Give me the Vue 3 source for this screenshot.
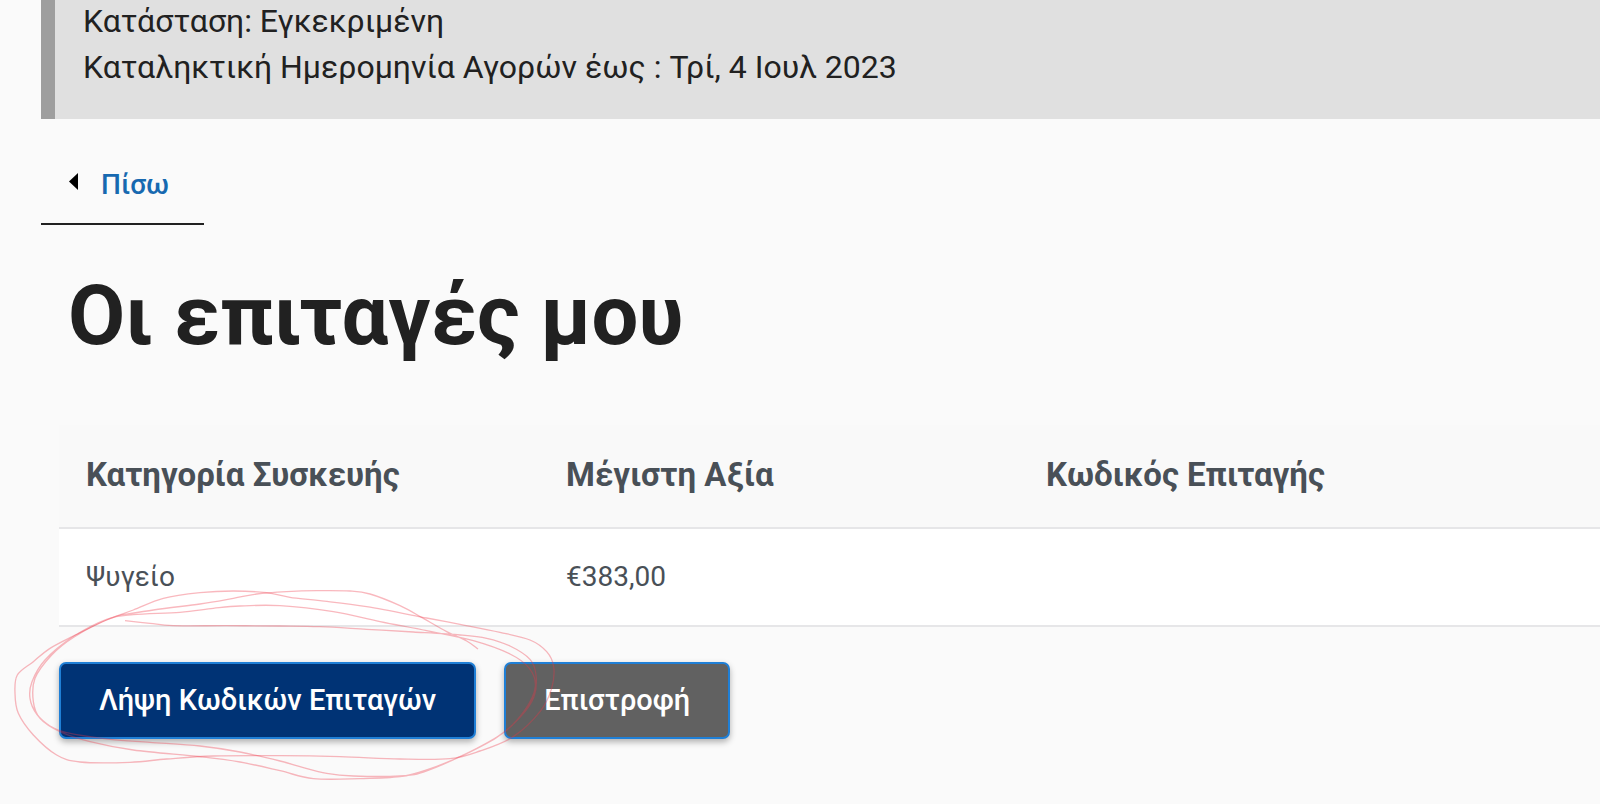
<script setup>
const vouchers = [{ category: 'Ψυγείο', value: '€383,00', code: '' }]

// Freehand pen marks around the primary action, as sampled pen positions
const marks = [
  [
    [375, 182], [450, 190], [520, 197], [680, 197], [840, 198], [960, 200], [1100, 208], [1240, 216], [1380, 225],
    [1460, 235], [1530, 258], [1590, 298], [1608, 345], [1602, 410], [1560, 472], [1490, 532], [1380, 590],
    [1270, 636], [1200, 648], [1060, 648], [980, 640], [900, 620], [840, 603], [720, 576], [600, 558], [450, 547],
    [330, 538], [200, 518], [150, 498], [110, 462], [90, 415], [96, 365], [135, 300], [220, 230], [320, 178],
    [400, 164], [540, 157], [640, 145], [720, 138], [840, 137], [1000, 155], [1140, 185], [1280, 212], [1420, 242],
    [1530, 282], [1588, 325], [1606, 380], [1575, 450], [1510, 518], [1390, 585], [1280, 630], [1200, 650],
    [1080, 656], [940, 656], [840, 632], [720, 606], [600, 590], [400, 570], [270, 545], [180, 515], [120, 475],
    [100, 425], [105, 355], [155, 285], [220, 232], [330, 175], [460, 150], [600, 132], [700, 115], [770, 102],
    [860, 95], [950, 92], [1050, 93], [1110, 102], [1200, 137], [1270, 175], [1340, 215], [1400, 243], [1434, 267]
  ],
  [
    [220, 228], [150, 265], [100, 305], [52, 345], [45, 400], [55, 460], [100, 525], [170, 585], [240, 606],
    [390, 607], [500, 597], [640, 588], [840, 587], [1020, 590], [1200, 597], [1350, 596], [1440, 573],
    [1540, 530], [1620, 455], [1655, 385], [1661, 320], [1640, 275], [1590, 240], [1500, 217], [1380, 193],
    [1280, 174], [1100, 140], [960, 122], [870, 112], [800, 98], [700, 93], [600, 98], [490, 115], [400, 150],
    [320, 180], [220, 228]
  ]
]

function smooth(points) {
  let d = `M${points[0]}`
  for (let i = 0; i < points.length - 1; i++) {
    const a = points[i - 1] || points[i]
    const b = points[i]
    const c = points[i + 1]
    const e = points[i + 2] || c
    d += ` C${b[0] + (c[0] - a[0]) / 6} ${b[1] + (c[1] - a[1]) / 6} ${c[0] - (e[0] - b[0]) / 6} ${c[1] - (e[1] - b[1]) / 6} ${c[0]} ${c[1]}`
  }
  return d
}
</script>

<template>
  <main class="page">
    <section class="notice">
      <p>Κατάσταση: Εγκεκριμένη</p>
      <p>Καταληκτική Ημερομηνία Αγορών έως : Τρί, 4 Ιουλ 2023</p>
    </section>

    <a class="back" href="#">
      <svg class="arrow" viewBox="0 0 9 17" aria-hidden="true"><path d="M9 0v17L0 8.5z" /></svg>
      <span>Πίσω</span>
    </a>

    <h1>Οι επιταγές μου</h1>

    <div class="content">
      <table>
        <colgroup>
          <col class="fixed" />
          <col class="fixed" />
          <col />
        </colgroup>
        <thead>
          <tr>
            <th scope="col">Κατηγορία Συσκευής</th>
            <th scope="col">Μέγιστη Αξία</th>
            <th scope="col">Κωδικός Επιταγής</th>
          </tr>
        </thead>
        <tbody>
          <tr v-for="v in vouchers" :key="v.category">
            <td>{{ v.category }}</td>
            <td>{{ v.value }}</td>
            <td>{{ v.code }}</td>
          </tr>
        </tbody>
      </table>

      <div class="actions">
        <button type="button" class="primary">Λήψη Κωδικών Επιταγών</button>
        <button type="button" class="secondary">Επιστροφή</button>
        <svg class="marks" viewBox="0 0 1710 732" aria-hidden="true">
          <path v-for="(m, i) in marks" :key="i" :d="smooth(m)" />
        </svg>
      </div>
    </div>
  </main>
</template>

<style>
body {
  margin: 0;
  background: #fafafa;
}
</style>

<style scoped>
.page {
  font-family: Roboto, "Noto Sans", sans-serif;
  color: #212121;
  overflow: hidden;
  padding-bottom: 64px;
}
.notice {
  display: flex;
  flex-direction: column;
  gap: 4px;
  margin-left: 41px;
  padding: 0 28px 31px;
  border-left: 14px solid #9e9e9e;
  background: #e0e0e0;
  font-size: 32px;
  line-height: 42px;
}
.notice p {
  margin: 0;
}
.back {
  display: flex;
  align-items: flex-start;
  gap: 23px;
  box-sizing: border-box;
  width: 163px;
  margin: 24px 0 0 41px;
  padding: 20px 28px 16px;
  border-bottom: 2px solid #212121;
  color: #1769b0;
  font-size: 28px;
  font-weight: 500;
  line-height: 44px;
  text-decoration: none;
}
.arrow {
  width: 9px;
  height: 17px;
  margin-top: 10px;
  fill: #000;
}
h1 {
  margin: 41px 0 59px 68px;
  font-size: 83px;
  font-weight: 700;
  line-height: 100px;
}
.content {
  margin-left: 59px;
}
table {
  width: 100%;
  table-layout: fixed;
  border-collapse: collapse;
  color: #495057;
}
.fixed {
  width: 480px;
}
th,
td {
  padding: 28px 27px;
  border-bottom: 2px solid #e6e6e8;
  text-align: left;
}
th {
  padding-bottom: 30px;
  background: #f9f9f9;
  font-size: 33px;
  font-weight: 700;
  line-height: 44px;
}
td {
  background: #fff;
  font-size: 28px;
  line-height: 40px;
}
.actions {
  position: relative;
  display: flex;
  gap: 28px;
  padding-top: 35px;
}
button {
  padding: 16px 38px;
  border: 2px solid #1f7fd6;
  border-radius: 7px;
  box-shadow: 0 3px 6px rgba(0, 0, 0, 0.3);
  color: #fff;
  font-family: inherit;
  font-size: 29px;
  font-weight: 500;
  line-height: 41px;
}
.primary {
  background: #003375;
}
.secondary {
  background: #616161;
}
.marks {
  position: absolute;
  left: -59px;
  top: -67px;
  width: 570px;
  height: 244px;
  fill: none;
  stroke: #ee3344;
  stroke-opacity: 0.35;
  stroke-width: 4;
  pointer-events: none;
}
</style>
